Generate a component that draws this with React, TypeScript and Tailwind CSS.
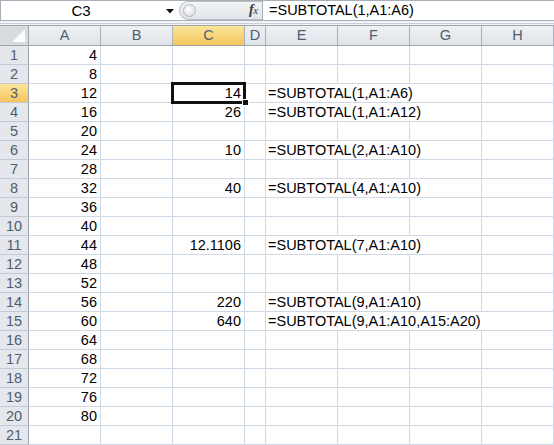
import React from "react";

type Row = { a?: string; c?: string; e?: string; span?: number };

const rows: Row[] = [
  { a: "4" },
  { a: "8" },
  { a: "12", c: "14", e: "=SUBTOTAL(1,A1:A6)", span: 3 },
  { a: "16", c: "26", e: "=SUBTOTAL(1,A1:A12)", span: 3 },
  { a: "20" },
  { a: "24", c: "10", e: "=SUBTOTAL(2,A1:A10)", span: 3 },
  { a: "28" },
  { a: "32", c: "40", e: "=SUBTOTAL(4,A1:A10)", span: 3 },
  { a: "36" },
  { a: "40" },
  { a: "44", c: "12.1106", e: "=SUBTOTAL(7,A1:A10)", span: 3 },
  { a: "48" },
  { a: "52" },
  { a: "56", c: "220", e: "=SUBTOTAL(9,A1:A10)", span: 3 },
  { a: "60", c: "640", e: "=SUBTOTAL(9,A1:A10,A15:A20)", span: 4 },
  { a: "64" },
  { a: "68" },
  { a: "72" },
  { a: "76" },
  { a: "80" },
  {},
];

const cellBase =
  "box-border h-[19px] shrink-0 border-r border-b border-[#d0d7e5] flex items-center px-[3px] whitespace-nowrap overflow-hidden";

function Cell({ w, right, children }: { w: string; right?: boolean; children?: React.ReactNode }) {
  return <div className={`${cellBase} ${w} ${right ? "justify-end" : "justify-start"}`}>{children}</div>;
}

const cols = [
  { k: "A", w: "w-[72px]" },
  { k: "B", w: "w-[72px]" },
  { k: "C", w: "w-[72px]" },
  { k: "D", w: "w-[21px]" },
  { k: "E", w: "w-[72px]" },
  { k: "F", w: "w-[72px]" },
  { k: "G", w: "w-[72px]" },
  { k: "H", w: "w-[72px]" },
];

export default function App() {
  return (
    <div
      className="relative w-[554px] h-[445px] overflow-hidden bg-white text-black text-[14.5px] leading-none"
      style={{ fontFamily: '"Liberation Sans", Arial, sans-serif' }}
    >
      {/* Formula bar */}
      <div className="h-[25px] flex flex-col bg-[#eef1f5]">
        <div className="box-border h-[21px] flex border-t border-b border-l border-[#a7aeb7] bg-white">
          <div className="relative w-[177px] shrink-0 flex items-center justify-center text-[15px]">
            <span className="pr-[17px]">C3</span>
            <svg className="absolute left-[165px] top-[8px]" width="8" height="5" viewBox="0 0 8 5">
              <path d="M0 0 L8 0 L4 4.5 Z" fill="#111" />
            </svg>
          </div>
          <div className="relative w-[84px] shrink-0 flex items-center">
            <div className="box-border absolute left-[1px] top-[0px] h-[19px] w-[83px] rounded-l-[10px] border border-r-0 border-[#b9bfc7] bg-[linear-gradient(to_bottom,#f3f4f6,#e1e4e8)]" />
            <div className="absolute left-[5px] top-[3px] h-[13px] w-[13px] rounded-full border border-[#b3b9c1] bg-[radial-gradient(circle_at_40%_40%,#ffffff,#d3d7dc)]" />
            <span
              className="absolute left-[71px] top-[2px] italic text-[14px] text-[#3a3a3a] tracking-[-0.5px]"
              style={{ fontFamily: '"Liberation Serif", "Times New Roman", serif' }}
            >
              <span className="font-bold">f</span>
              <span className="text-[11px]">x</span>
            </span>
          </div>
          <div className="flex-1 border-l border-[#a7aeb7] flex items-center pl-[6px]">=SUBTOTAL(1,A1:A6)</div>
        </div>
        <div className="h-[2px] bg-[#f1f3f6]" />
        <div className="h-[1px] bg-[#c9cfd6]" />
        <div className="h-[1px] bg-[#f1f3f6]" />
      </div>

      {/* Column headers */}
      <div className="box-border h-[21px] flex border-t border-b border-[#9ea5ae] text-[#4f5d72]">
        <div className="box-border w-[29px] shrink-0 border-r border-[#9ea5ae] bg-[#d9dcdf] relative">
          <svg className="absolute left-[12px] top-[3px]" width="13" height="13" viewBox="0 0 13 13">
            <defs>
              <linearGradient id="tri" x1="0" y1="0" x2="1" y2="1">
                <stop offset="0" stopColor="#f4f4f4" />
                <stop offset="1" stopColor="#ffffff" />
              </linearGradient>
            </defs>
            <path d="M13 0 L13 13 L0 13 Z" fill="url(#tri)" />
          </svg>
        </div>
        {cols.map((c) => (
          <div
            key={c.k}
            className={`box-border shrink-0 ${c.w} border-r border-[#aab1ba] flex items-center justify-center ${
              c.k === "C"
                ? "bg-[linear-gradient(to_bottom,#fce59b,#f6c55d)]"
                : "bg-[linear-gradient(to_bottom,#eef0f3,#e0e4e9)]"
            }`}
          >
            {c.k}
          </div>
        ))}
      </div>

      {/* Rows */}
      {rows.map((r, i) => {
        const n = i + 1;
        const sel = n === 3;
        return (
          <div key={n} className="flex h-[19px]">
            <div
              className={`box-border w-[29px] shrink-0 h-[19px] border-r border-r-[#9ea5ae] border-b border-b-[#c3cad4] flex items-center justify-center text-[#4f5d72] ${
                sel ? "bg-[linear-gradient(to_bottom,#fce59b,#f6c55d)]" : "bg-[#e4e7eb]"
              }`}
            >
              {n}
            </div>
            <Cell w="w-[72px]" right>
              {r.a}
            </Cell>
            <Cell w="w-[72px]" />
            <Cell w="w-[72px]" right>
              {r.c}
            </Cell>
            <Cell w="w-[21px]" />
            {r.e ? (
              r.span === 4 ? (
                <div className={`${cellBase} w-[288px] justify-start pl-[2px]`}>{r.e}</div>
              ) : (
                <>
                  <div className={`${cellBase} w-[216px] justify-start pl-[2px]`}>{r.e}</div>
                  <Cell w="w-[72px]" />
                </>
              )
            ) : (
              <>
                <Cell w="w-[72px]" />
                <Cell w="w-[72px]" />
                <Cell w="w-[72px]" />
                <Cell w="w-[72px]" />
              </>
            )}
          </div>
        );
      })}

      {/* Selection on C3 */}
      <div className="box-border absolute left-[171px] top-[82px] w-[75px] h-[22px] border-[3px] border-[#111]" />
      <div className="box-border absolute left-[242px] top-[99px] w-[7px] h-[7px] border border-white bg-[#111]" />
    </div>
  );
}
